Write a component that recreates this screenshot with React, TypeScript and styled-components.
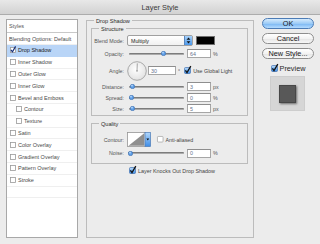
import React from "react";
import styled, { createGlobalStyle } from "styled-components";

const Global = createGlobalStyle`
  html, body { margin: 0; padding: 0; background: #ececec; }
  body { font-family: "Liberation Sans", Arial, sans-serif; color: #222; }
  * { box-sizing: border-box; }
`;

const Window = styled.div`
  width: 320px;
  height: 244px;
  background: #ececec;
  overflow: hidden;
  display: flex;
  flex-direction: column;
`;

const TitleBar = styled.div`
  flex: none;
  height: 15px;
  background: linear-gradient(#e8e8e8, #d2d2d2);
  border-bottom: 1px solid #acacac;
  display: flex;
  align-items: center;
  justify-content: center;
  font-size: 7.4px;
  color: #3a3a3a;
`;

const Body = styled.div`
  display: flex;
  align-items: flex-start;
  padding-left: 6px;
`;

/* ---------- sidebar ---------- */
const Sidebar = styled.div`
  flex: none;
  width: 72px;
  height: 219px;
  margin-top: 4px;
  background: #fff;
  border: 1px solid #a8a8a8;
  display: flex;
  flex-direction: column;
`;

const SideHeader = styled.div`
  height: 13px;
  display: flex;
  align-items: center;
  padding-left: 2px;
  font-size: 5.5px;
  color: #555;
  border-bottom: 1px solid #c8c8c8;
`;

const SideRow = styled.div<{ $h: number; $active?: boolean; $indent?: boolean; $plain?: boolean }>`
  height: ${(p) => p.$h}px;
  flex: none;
  display: flex;
  align-items: center;
  gap: 2px;
  padding-left: ${(p) => (p.$plain ? 2 : p.$indent ? 9 : 3)}px;
  font-size: 5.5px;
  color: ${(p) => (p.$active ? "#222" : "#4a4a4a")};
  white-space: nowrap;
  background: ${(p) => (p.$active ? "#b9d5f7" : "transparent")};
  border-bottom: 1px solid ${(p) => (p.$active ? "#b9d5f7" : "#efefef")};
`;

const SmallBox = ({ checked }: { checked?: boolean }) => (
  <svg width="6" height="6" viewBox="0 0 6 6" style={{ flex: "none", overflow: "visible" }}>
    <rect x="0.5" y="0.5" width="5" height="5" fill="#fff" stroke="#9a9a9a" strokeWidth="0.8" />
    {checked && (
      <path d="M1 3 L2.5 4.8 L5.6 -0.6" fill="none" stroke="#17307a" strokeWidth="1.2" />
    )}
  </svg>
);

const AquaBox = ({ checked = true, size = 7 }: { checked?: boolean; size?: number }) => (
  <svg width={size} height={size} viewBox="0 0 7 7" style={{ flex: "none", overflow: "visible" }}>
    <defs>
      <linearGradient id="aq" x1="0" y1="0" x2="0" y2="1">
        <stop offset="0" stopColor="#c4e1fd" />
        <stop offset="0.5" stopColor="#76b3f1" />
        <stop offset="1" stopColor="#3d8ce6" />
      </linearGradient>
    </defs>
    {checked ? (
      <>
        <rect x="0.5" y="0.5" width="6" height="6" rx="1" fill="url(#aq)" stroke="#3f6eaf" strokeWidth="0.7" />
        <path d="M1.4 3.4 L3 5.6 L6.8 -0.8" fill="none" stroke="#111" strokeWidth="1.3" />
      </>
    ) : (
      <rect x="0.5" y="0.5" width="6" height="6" rx="0.8" fill="#fff" stroke="#999" strokeWidth="0.7" />
    )}
  </svg>
);

/* ---------- group boxes ---------- */
const Group = styled.div<{ $w: number; $h?: number; $mt?: number; $ml?: number; $pb?: number }>`
  flex: none;
  width: ${(p) => p.$w}px;
  ${(p) => (p.$h ? `height: ${p.$h}px;` : "")}
  margin-top: ${(p) => p.$mt ?? 0}px;
  margin-left: ${(p) => p.$ml ?? 0}px;
  padding-bottom: ${(p) => p.$pb ?? 0}px;
  border: 1px solid #bcbcbc;
  display: flex;
  flex-direction: column;
`;

const Legend = styled.div`
  align-self: flex-start;
  height: 8px;
  line-height: 8px;
  margin: -4px 0 0 7px;
  padding: 0 2px;
  background: #ececec;
  font-size: 5.6px;
  color: #2a2a2a;
  white-space: nowrap;
`;

const Row = styled.div<{ $h: number; $mt?: number; $pl?: number }>`
  flex: none;
  display: flex;
  align-items: center;
  height: ${(p) => p.$h}px;
  margin-top: ${(p) => p.$mt ?? 0}px;
  padding-left: ${(p) => p.$pl ?? 0}px;
  white-space: nowrap;
`;

const FieldLabel = styled.span`
  flex: none;
  width: 32px;
  text-align: right;
  font-size: 5.3px;
  color: #555;
`;

const Text = styled.span<{ $ml?: number; $size?: number }>`
  margin-left: ${(p) => p.$ml ?? 0}px;
  font-size: ${(p) => p.$size ?? 5.4}px;
  color: #444;
`;

const Select = styled.div`
  flex: none;
  margin-left: 3px;
  width: 66px;
  height: 11px;
  background: linear-gradient(#ffffff, #f1f1f1);
  border: 1px solid #a0a0a0;
  border-radius: 2px;
  display: flex;
  align-items: center;
  padding-left: 3px;
  font-size: 5.3px;
  color: #222;
`;

const SelectValue = styled.span`
  flex: 1;
`;

const SelectArrows = styled.span`
  flex: none;
  width: 8px;
  height: 9px;
  background: linear-gradient(#a9d2fa, #4a97ea);
  border-left: 1px solid #5a86bd;
  display: flex;
  align-items: center;
  justify-content: center;
`;

const Swatch = styled.div`
  flex: none;
  margin-left: 3px;
  width: 19px;
  height: 9px;
  background: #000;
  border: 1px solid #6f6f6f;
`;

const SliderWrap = styled.div<{ $ml: number; $w: number }>`
  flex: none;
  position: relative;
  margin-left: ${(p) => p.$ml}px;
  width: ${(p) => p.$w}px;
  height: 7px;
  display: flex;
  align-items: center;
`;

const Track = styled.div`
  width: 100%;
  height: 2px;
  border-radius: 1px;
  background: #7c7c7c;
  border-bottom: 1px solid #ababab;
`;

const Thumb = styled.svg`
  position: absolute;
  top: 1px;
`;

const Slider = ({ value, ml = 5, w = 55 }: { value: number; ml?: number; w?: number }) => (
  <SliderWrap $ml={ml} $w={w}>
    <Track />
    <Thumb width="5" height="5" viewBox="0 0 5 5" style={{ left: `${(value / 100) * (w - 5)}px` }}>
      <circle cx="2.5" cy="2.5" r="2.2" fill="#5d9fe9" stroke="#3a6aa6" strokeWidth="0.6" />
      <circle cx="2" cy="1.8" r="0.8" fill="#cfe5ff" />
    </Thumb>
  </SliderWrap>
);

const Input = styled.div<{ $w?: number; $ml?: number }>`
  flex: none;
  width: ${(p) => p.$w ?? 24}px;
  height: 9px;
  margin-left: ${(p) => p.$ml ?? 3}px;
  background: #fff;
  border: 1px solid #a6a6a6;
  border-top-color: #8e8e8e;
  display: flex;
  align-items: center;
  padding-left: 2px;
  font-size: 5.3px;
  color: #66748e;
`;

const Unit = styled.span`
  margin-left: 2px;
  font-size: 5.3px;
  color: #555;
`;

const Dial = () => (
  <svg width="20" height="20" viewBox="0 0 20 20" style={{ flex: "none", marginLeft: 3 }}>
    <defs>
      <radialGradient id="dialg" cx="0.45" cy="0.4" r="0.6">
        <stop offset="0" stopColor="#ffffff" />
        <stop offset="1" stopColor="#e2e2e2" />
      </radialGradient>
    </defs>
    <circle cx="10" cy="10" r="9.3" fill="url(#dialg)" stroke="#979797" strokeWidth="0.8" />
    <line x1="10" y1="10" x2="10.3" y2="2.4" stroke="#808080" strokeWidth="0.7" />
    <circle cx="10" cy="10" r="0.7" fill="#808080" />
  </svg>
);

const ContourPreview = () => (
  <svg width="24" height="15" viewBox="0 0 24 15" style={{ flex: "none", marginLeft: 3 }}>
    <defs>
      <linearGradient id="cblue" x1="0" y1="0" x2="0" y2="1">
        <stop offset="0" stopColor="#b2d8fc" />
        <stop offset="1" stopColor="#3f8de6" />
      </linearGradient>
    </defs>
    <rect x="0.5" y="0.5" width="17.5" height="14" fill="#fff" stroke="#949494" strokeWidth="0.8" />
    <polygon points="1.5,13.8 17.2,1.3 17.2,13.8" fill="#8f8f8f" />
    <rect x="18" y="0.5" width="5.5" height="14" fill="url(#cblue)" stroke="#4a7ab6" strokeWidth="0.7" />
    <polygon points="19.4,6.4 22.2,6.4 20.8,8.6" fill="#111" />
  </svg>
);

/* ---------- right column ---------- */
const SideCol = styled.div`
  flex: none;
  width: 52px;
  margin-left: 8px;
  margin-top: 3px;
  display: flex;
  flex-direction: column;
  gap: 4px;
`;

const Button = styled.div<{ $primary?: boolean }>`
  height: 11px;
  border-radius: 6px;
  display: flex;
  align-items: center;
  justify-content: center;
  font-size: 7.3px;
  color: #1a1a1a;
  border: 1px solid ${(p) => (p.$primary ? "#4c7cb6" : "#8e8e8e")};
  background: ${(p) =>
    p.$primary
      ? "linear-gradient(#d6ebfd, #9ccbf6 50%, #78b5f2 51%, #b5dcff)"
      : "linear-gradient(#ffffff, #f3f3f3 50%, #e4e4e4 51%, #f7f7f7)"};
`;

const PreviewRow = styled.div`
  height: 10px;
  display: flex;
  align-items: center;
  justify-content: center;
  gap: 2px;
  font-size: 7.3px;
  color: #2a2a2a;
`;

const PreviewSwatch = styled.div`
  width: 35px;
  height: 35px;
  margin: -1px 0 0 8px;
  background: #d6d6d6;
  border: 1px solid #cdcdcd;
  display: flex;
  align-items: center;
  justify-content: center;
`;

const PreviewSquare = styled.div`
  width: 17px;
  height: 18px;
  background: #585858;
  border: 1px solid #474747;
  box-shadow: 1px 1px 2px rgba(0, 0, 0, 0.5);
`;

const styleItems: { name: string; indent?: boolean }[] = [
  { name: "Inner Shadow" },
  { name: "Outer Glow" },
  { name: "Inner Glow" },
  { name: "Bevel and Emboss" },
  { name: "Contour", indent: true },
  { name: "Texture", indent: true },
  { name: "Satin" },
  { name: "Color Overlay" },
  { name: "Gradient Overlay" },
  { name: "Pattern Overlay" },
  { name: "Stroke" },
];

const metricRows = [
  { label: "Distance:", value: "3", unit: "px", pct: 1 },
  { label: "Spread:", value: "0", unit: "%", pct: 0 },
  { label: "Size:", value: "5", unit: "px", pct: 2 },
];

export default function App() {
  return (
    <Window>
      <Global />
      <TitleBar>Layer Style</TitleBar>
      <Body>
        <Sidebar>
          <SideHeader>Styles</SideHeader>
          <SideRow $h={12} $plain>Blending Options: Default</SideRow>
          <SideRow $h={11.8} $active>
            <SmallBox checked />
            Drop Shadow
          </SideRow>
          {styleItems.map((s) => (
            <SideRow key={s.name} $h={11.8} $indent={s.indent}>
              <SmallBox />
              {s.name}
            </SideRow>
          ))}
          <SideRow $h={11.8} />
        </Sidebar>

        <Group $w={168} $h={218} $mt={5} $ml={8}>
          <Legend>Drop Shadow</Legend>
          <Group $w={157} $mt={3} $ml={4} $pb={1}>
            <Legend>Structure</Legend>
            <Row $h={13} $mt={1}>
              <FieldLabel>Blend Mode:</FieldLabel>
              <Select>
                <SelectValue>Multiply</SelectValue>
                <SelectArrows>
                  <svg width="5" height="7" viewBox="0 0 5 7">
                    <polygon points="0.6,2.8 4.4,2.8 2.5,0.6" fill="#111" />
                    <polygon points="0.6,4.2 4.4,4.2 2.5,6.4" fill="#111" />
                  </svg>
                </SelectArrows>
              </Select>
              <Swatch />
            </Row>
            <Row $h={13}>
              <FieldLabel>Opacity:</FieldLabel>
              <Slider value={64} />
              <Input>64</Input>
              <Unit>%</Unit>
            </Row>
            <Row $h={21}>
              <FieldLabel>Angle:</FieldLabel>
              <Dial />
              <Input $w={28} $ml={1}>30</Input>
              <Unit>°</Unit>
              <span style={{ marginLeft: 4, display: "flex" }}>
                <AquaBox />
              </span>
              <Text $ml={2} $size={5.3}>Use Global Light</Text>
            </Row>
            {metricRows.map((m) => (
              <Row key={m.label} $h={11}>
                <FieldLabel>{m.label}</FieldLabel>
                <Slider value={m.pct} />
                <Input>{m.value}</Input>
                <Unit>{m.unit}</Unit>
              </Row>
            ))}
          </Group>

          <Group $w={157} $mt={7} $ml={4} $pb={5}>
            <Legend>Quality</Legend>
            <Row $h={17} $mt={3}>
              <FieldLabel>Contour:</FieldLabel>
              <ContourPreview />
              <span style={{ marginLeft: 6, display: "flex" }}>
                <AquaBox checked={false} size={6.5} />
              </span>
              <Text $ml={2} $size={5.3}>Anti-aliased</Text>
            </Row>
            <Row $h={10}>
              <FieldLabel>Noise:</FieldLabel>
              <Slider value={0} ml={4} w={56} />
              <Input>0</Input>
              <Unit>%</Unit>
            </Row>
          </Group>

          <Row $h={9} $mt={2} $pl={42}>
            <AquaBox />
            <Text $ml={2} $size={5.4}>Layer Knocks Out Drop Shadow</Text>
          </Row>
        </Group>

        <SideCol>
          <Button $primary>OK</Button>
          <Button>Cancel</Button>
          <Button>New Style...</Button>
          <PreviewRow>
            <AquaBox />
            Preview
          </PreviewRow>
          <PreviewSwatch>
            <PreviewSquare />
          </PreviewSwatch>
        </SideCol>
      </Body>
    </Window>
  );
}
